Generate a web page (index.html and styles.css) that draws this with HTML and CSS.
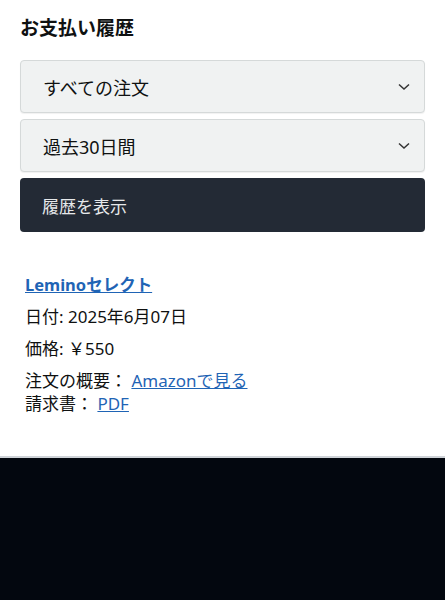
FILE: index.html
```html
<!DOCTYPE html>
<html lang="ja">
<head>
<meta charset="utf-8">
<link rel="stylesheet" href="styles.css">
</head>
<body>
<main class="page">
  <h1 class="title">お支払い履歴</h1>
  <div class="filters">
    <div class="select"><span>すべての注文</span><svg class="chev" viewBox="0 0 12 8" width="12" height="8"><path d="M1 1.5 L6 6 L11 1.5" fill="none" stroke="#333" stroke-width="1.5"/></svg></div>
    <div class="select"><span>過去30日間</span><svg class="chev" viewBox="0 0 12 8" width="12" height="8"><path d="M1 1.5 L6 6 L11 1.5" fill="none" stroke="#333" stroke-width="1.5"/></svg></div>
    <div class="btn">履歴を表示</div>
  </div>
  <section class="item">
    <a class="name" href="#">Leminoセレクト</a>
    <p class="row">日付: 2025年6月07日</p>
    <p class="row">価格: ￥550</p>
    <div class="links">
      <p>注文の概要： <a href="#">Amazonで見る</a></p>
      <p>請求書： <a href="#">PDF</a></p>
    </div>
  </section>
</main>
<footer class="footer"></footer>
</body>
</html>
```
FILE: styles.css
```css
html, body { margin: 0; padding: 0; background: #fff; }
body {
  font-family: "Noto Sans", "Noto Sans CJK JP", sans-serif;
  color: #0f1111;
  width: 445px;
  height: 600px;
  display: flex;
  flex-direction: column;
  overflow: hidden;
}
.page { padding: 0 20px; flex: 0 0 456px; box-sizing: border-box; }
.title { font-size: 19px; font-weight: 700; margin: 0; padding-top: 14px; line-height: 28px; }
.filters { margin-top: 18px; display: flex; flex-direction: column; gap: 6px; }
.select {
  height: 53px; box-sizing: border-box;
  background: #f0f2f2; border: 1px solid #d5d9d9; border-radius: 4px;
  display: flex; align-items: center; justify-content: space-between;
  padding: 0 14px 0 22px; font-size: 18px; color: #0f1111;
  box-shadow: 0 1px 1px rgba(0,0,0,0.06);
}
.chev { display: block; }
.btn {
  height: 54px; box-sizing: border-box;
  background: #232a35; border-radius: 4px; color: #e6e8ea;
  display: flex; align-items: center; padding-left: 22px; font-size: 17px;
}
.item { padding: 41px 0 0 5px; font-size: 17px; }
.name { color: #1f64b5; font-weight: 700; text-decoration: underline; font-size: 16.5px; line-height: 24px; display: block; }
.row { margin: 8px 0 0; line-height: 24px; }
.links { margin-top: 8px; }
.links p { margin: 0; line-height: 23px; }
.links a { color: #1f64b5; text-decoration: underline; }
.footer { flex: 1; background: #03070f; border-top: 2px solid #cfd3d8; }
```
